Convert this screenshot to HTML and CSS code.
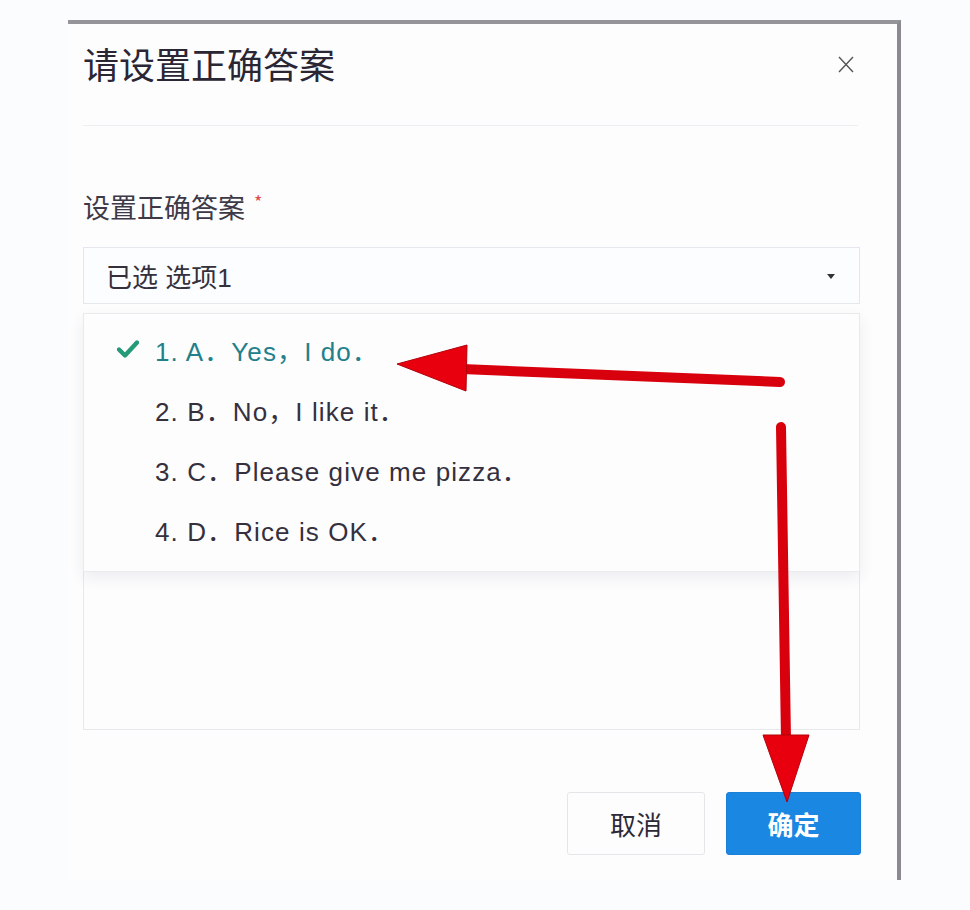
FILE: index.html
```html
<!DOCTYPE html>
<html lang="zh-CN">
<head>
<meta charset="utf-8">
<title>请设置正确答案</title>
<link rel="stylesheet" href="styles.css">
</head>
<body>
<div class="dialog">
  <div class="header">
    <div class="title-row">
      <h1 class="title">请设置正确答案</h1>
      <svg class="close" width="16" height="17" viewBox="0 0 16 17"><path d="M1 1 L15 16 M15 1 L1 16" stroke="#555" stroke-width="1.4" fill="none"/></svg>
    </div>
  </div>
  <div class="body">
    <div class="label">设置正确答案<span class="req">*</span></div>
    <div class="select">
      <span class="select-text">已选 选项1</span>
      <span class="caret"></span>
    </div>
    <div class="textarea">
      <ul class="menu">
        <li class="item selected"><svg class="check" width="22" height="20" viewBox="0 0 22 20"><path d="M2 10.5 L8 16.5 L20 3.5" stroke="#259a78" stroke-width="4.4" fill="none" stroke-linecap="round" stroke-linejoin="round"/></svg><span class="txt">1. A．Yes，I do．</span></li>
        <li class="item"><span class="check-ph"></span><span class="txt">2. B．No，I like it．</span></li>
        <li class="item"><span class="check-ph"></span><span class="txt">3. C．Please give me pizza．</span></li>
        <li class="item"><span class="check-ph"></span><span class="txt">4. D．Rice is OK．</span></li>
      </ul>
    </div>
    <div class="footer">
      <button class="btn btn-cancel">取消</button>
      <button class="btn btn-ok">确定</button>
    </div>
  </div>
</div>
<svg class="annot" width="970" height="910" viewBox="0 0 970 910">
  <g stroke="#b3000a" stroke-width="1" fill="#e8000e">
    <line x1="462" y1="369" x2="780" y2="382" stroke="#d8000c" stroke-width="10" stroke-linecap="round"/>
    <polygon points="397,364 467,345 466,391"/>
    <line x1="781" y1="427" x2="786" y2="740" stroke="#d8000c" stroke-width="10" stroke-linecap="round"/>
    <polygon points="763,735 809,735 787,802"/>
  </g>
</svg>
</body>
</html>
```

FILE: styles.css
```css
html, body {
  margin: 0;
  padding: 0;
}
body {
  background: #fbfcfe;
  width: 970px;
  height: 910px;
  position: relative;
  overflow: hidden;
  font-family: "Liberation Sans", "Noto Sans CJK SC", sans-serif;
  color: #333;
}
.dialog {
  margin: 20px 0 0 68px;
  width: 833px;
  height: 860px;
  box-sizing: border-box;
  border-top: 4px solid #959499;
  border-right: 4px solid #8c8990;
  background: #fdfdfe;
  padding: 0 37px 0 15px;
  display: flex;
  flex-direction: column;
}
.header {
  padding: 17px 0 40px 0;
  border-bottom: 1px solid #eceef2;
  margin-right: 2px;
}
.title-row {
  display: flex;
  align-items: center;
  justify-content: space-between;
  height: 44px;
}
.title {
  margin: 0;
  font-family: "Noto Sans CJK SC", sans-serif;
  font-weight: 400;
  font-size: 36px;
  line-height: 44px;
  color: #2a2633;
}
.close {
  margin-right: 4px;
  margin-top: 2px;
  display: block;
}
.body {
  display: flex;
  flex-direction: column;
}
.label {
  margin-top: 63px;
  font-family: "Noto Sans CJK SC", sans-serif;
  font-size: 27px;
  line-height: 36px;
  height: 36px;
  color: #3e3946;
}
.req {
  color: #e04a4a;
  font-size: 18px;
  vertical-align: top;
  line-height: 24px;
  margin-left: 9px;
}
.select {
  margin-top: 22px;
  height: 57px;
  box-sizing: border-box;
  border: 1px solid #e4e7eb;
  background: #fcfdfe;
  display: flex;
  align-items: center;
  justify-content: space-between;
  padding: 0 24px 0 22px;
}
.select-text {
  font-family: "Liberation Sans", "Noto Sans CJK SC", sans-serif;
  font-size: 26px;
  color: #34303c;
}
.caret {
  width: 0;
  height: 0;
  border-left: 4px solid transparent;
  border-right: 4px solid transparent;
  border-top: 5px solid #333;
  margin-top: 2px;
}
.textarea {
  margin-top: 9px;
  height: 417px;
  box-sizing: border-box;
  border: 1px solid #e6e8ec;
  position: relative;
}
.menu {
  position: absolute;
  top: -1px;
  left: -1px;
  right: -1px;
  height: 259px;
  box-sizing: border-box;
  margin: 0;
  padding: 5px 0 13px 0;
  list-style: none;
  background: #fdfdfe;
  border: 1px solid #e8eaee;
  box-shadow: 0 6px 14px rgba(40, 50, 70, 0.08);
}
.item {
  height: 60px;
  display: flex;
  align-items: center;
  padding-left: 33px;
  font-size: 26px;
  letter-spacing: 1.1px;
  color: #35303d;
}
.item.selected {
  color: #22808a;
}
.check, .check-ph {
  width: 22px;
  height: 20px;
  margin-right: 16px;
  flex: none;
  display: block;
}
.footer {
  margin-top: 62px;
  display: flex;
  justify-content: flex-end;
  gap: 21px;
  margin-right: -1px;
}
.btn {
  font-family: "Noto Sans CJK SC", sans-serif;
  font-size: 26px;
  height: 63px;
  border-radius: 3px;
  box-sizing: border-box;
  cursor: pointer;
}
.btn-cancel {
  width: 138px;
  background: #fdfdfe;
  border: 1px solid #e4e6ea;
  color: #2e2936;
}
.btn-ok {
  width: 135px;
  background: #1a87e2;
  border: 1px solid #1a80d8;
  color: #fff;
  font-weight: 700;
}
.annot {
  position: absolute;
  top: 0;
  left: 0;
  pointer-events: none;
}
```
